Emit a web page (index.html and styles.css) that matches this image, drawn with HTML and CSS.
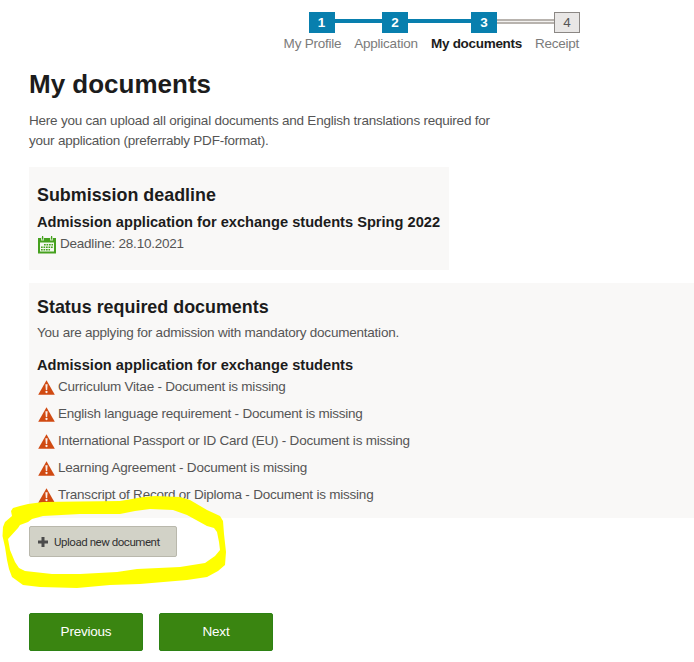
FILE: index.html
```html
<!DOCTYPE html>
<html lang="en">
<head>
<meta charset="utf-8">
<title>My documents</title>
<link rel="stylesheet" href="styles.css">
</head>
<body>
<svg class="defs" width="0" height="0" aria-hidden="true">
  <symbol id="warn" viewBox="0 0 17 15">
    <path d="M8.500 0.300 16.800 14.700H.2Z" fill="#d04a12"/>
    <path d="M7.400 4.200h2.200l-.4 5.800H7.800Z" fill="#fbeee8"/>
    <circle cx="8.500" cy="12" r="1.150" fill="#fbeee8"/>
  </symbol>
</svg>
<main class="page">
  <ol class="steps">
    <li class="step done profile"><span class="num">1</span><span class="label">My Profile</span></li>
    <li class="step done application"><span class="num">2</span><span class="label">Application</span></li>
    <li class="step done current documents"><span class="num">3</span><span class="label">My documents</span></li>
    <li class="step receipt"><span class="num">4</span><span class="label">Receipt</span></li>
  </ol>
  <h1>My documents</h1>
  <p class="intro">Here you can upload all original documents and English translations required for<br>your application (preferrably PDF-format).</p>

  <section class="panel deadline">
    <h2>Submission deadline</h2>
    <h3>Admission application for exchange students Spring 2022</h3>
    <p class="date">
      <svg class="calendar" viewBox="0 0 18 18" width="18" height="18">
        <path d="M0 2h18v15.500H0Z" fill="#46a11f"/>
        <path d="M2 6.500h14v9H2Z" fill="#f3f8ef"/>
        <path d="M3 1.500h3v3H3ZM12 1.500h3v3h-3Z" fill="#cfe6c4"/>
        <path d="M4 0h1.200v3.500H4ZM13 0h1.200v3.500H13Z" fill="#46a11f"/>
        <path d="M6 8.700h9M3 11.200h12M3 13.700h9" fill="none" stroke="#46a11f" stroke-width="1.500" stroke-dasharray="1.700 .8"/>
      </svg>
      <span>Deadline: 28.10.2021</span>
    </p>
  </section>

  <section class="panel status">
    <h2>Status required documents</h2>
    <p>You are applying for admission with mandatory documentation.</p>
    <h3>Admission application for exchange students</h3>
    <ul class="missing">
      <li><svg class="warn"><use href="#warn"/></svg>Curriculum Vitae - Document is missing</li>
      <li><svg class="warn"><use href="#warn"/></svg>English language requirement - Document is missing</li>
      <li><svg class="warn"><use href="#warn"/></svg>International Passport or ID Card (EU) - Document is missing</li>
      <li><svg class="warn"><use href="#warn"/></svg>Learning Agreement - Document is missing</li>
      <li><svg class="warn"><use href="#warn"/></svg>Transcript of Record or Diploma - Document is missing</li>
    </ul>
  </section>

  <div class="upload-row">
    <button class="upload"><svg width="10" height="10" viewBox="0 0 10 10"><path d="M3.500 0h3v3.500H10v3H6.500V10h-3V6.500H0v-3h3.500Z" fill="#4b4b4b"/></svg>Upload new document</button>
    <svg class="marker" viewBox="0 0 230 100" width="230" height="100">
      <path fill="#ff0" fill-rule="evenodd" d="M12 22 11 17 13 14 20 12 28 10 43 8 80 7.500 120 7 132 5 143 3 155 2 180 3 190 6 207 16 220 22 223 27 224 40 226 58 225 71 218 77 207 83 187 86 140 90 110 91 77 94 40 93 23 91 12 83 9 75 7 66 5 53 2.500 42 3 33 5 28ZM8 45 18 34 20 31 28 28 32 25 43 22 80 20 120 20 135 17 150 15 173 16 187 21 207 32 214 34 217 38 219 48 220 56 215 62 205 69 180 73 137 75 117 78 80 80 52 80 25 77 19 74 15 68 10 56Z"/>
    </svg>
  </div>

  <div class="actions">
    <button>Previous</button>
    <button>Next</button>
  </div>
</main>
</body>
</html>
```
FILE: styles.css
```css
* { box-sizing: border-box; }
body {
  margin: 0;
  background: #fff;
  color: #555;
  font: 13.5px/20px "Liberation Sans", Arial, sans-serif;
  letter-spacing: -0.225px;
  overflow: hidden;
}
.defs { position: absolute; }
h1, h2, h3, p, ul, ol { margin: 0; padding: 0; }
ul, ol { list-style: none; }
h1, h2, h3 { color: #1c1c1c; letter-spacing: 0; }
.page { height: 662px; padding: 12px 0 0 29px; }

.steps { display: flex; width: 310px; margin-left: 253px; }
.step { position: relative; display: flex; flex-direction: column; align-items: center; color: #7b7b7b; }
.profile { width: 61px; }
.application { width: 86px; }
.documents { width: 95px; }
.receipt { width: 50px; margin-left: 8px; }
.num {
  position: relative;
  z-index: 1;
  width: 26px;
  height: 21px;
  background: #e9e7e6;
  border: 1px solid #8b8784;
  color: #555;
  line-height: 19px;
  text-align: center;
}
.label { line-height: 22px; white-space: nowrap; }
.done .num { background: #087fae; border-color: #087fae; color: #fff; font-weight: bold; }
.current .label { color: #1c1c1c; font-weight: bold; letter-spacing: -0.3px; }
.profile .num { margin-left: 18px; }
.application .num { margin-left: 18px; }
.documents .num { margin-left: 15px; }
.receipt .num { margin-left: 20px; }
.step:not(:last-child)::after {
  content: "";
  position: absolute;
  top: 7px;
  left: 50px;
  width: 60px;
  height: 4px;
  background: #087fae;
}
.step.application::after { width: 80px; }
.step.documents::after {
  box-sizing: border-box;
  height: 5px;
  width: 70px;
  left: 60px;
  background: #f3f1ef;
  border: solid #b8b3ae;
  border-width: 2px 0;
}

h1 { margin-top: 13px; font-size: 26px; line-height: 32px; }
.intro { margin-top: 11px; line-height: 19.5px; }

.panel { background: #f9f8f7; padding: 0 8px; }
h2 { font-size: 17.9px; line-height: 24px; }
h3 { font-size: 14.63px; line-height: 20px; white-space: nowrap; }
.deadline { width: 420px; height: 103px; margin-top: 17px; padding-top: 16px; }
.deadline h3 { margin-top: 5px; }
.date { display: flex; gap: 4px; margin: 2px 0 0 1px; }
.calendar { margin-top: 2px; }

.status { height: 235px; margin-top: 13px; padding-top: 12px; }
.status p { margin-top: 4px; }
.status h3 { margin-top: 12px; }
.missing { padding-top: 0.4px; }
.missing li { display: flex; height: 26.8px; line-height: 24px; }
.warn { width: 17px; height: 15px; margin: 5px 3px 0 1px; }

.upload-row { position: relative; margin-top: 8px; height: 31px; }
.upload {
  display: flex;
  align-items: center;
  gap: 6px;
  width: 148px;
  height: 31px;
  padding: 0 8px;
  background: #d2d2c7;
  border: 1px solid #b9b8ac;
  border-radius: 2px;
  color: #333;
  font: 11.5px "Roboto", sans-serif;
  letter-spacing: -0.46px;
}
.marker { position: absolute; left: -29px; top: -32px; }

.actions { display: flex; gap: 16px; margin-top: 56px; }
.actions button {
  width: 114px;
  height: 38px;
  padding: 0 0 2px;
  background: #3a8511;
  border: 1px solid #2d8214;
  border-radius: 2px;
  color: #fff;
  font: 13.5px "Liberation Sans", Arial, sans-serif;
  letter-spacing: -0.215px;
}
```
